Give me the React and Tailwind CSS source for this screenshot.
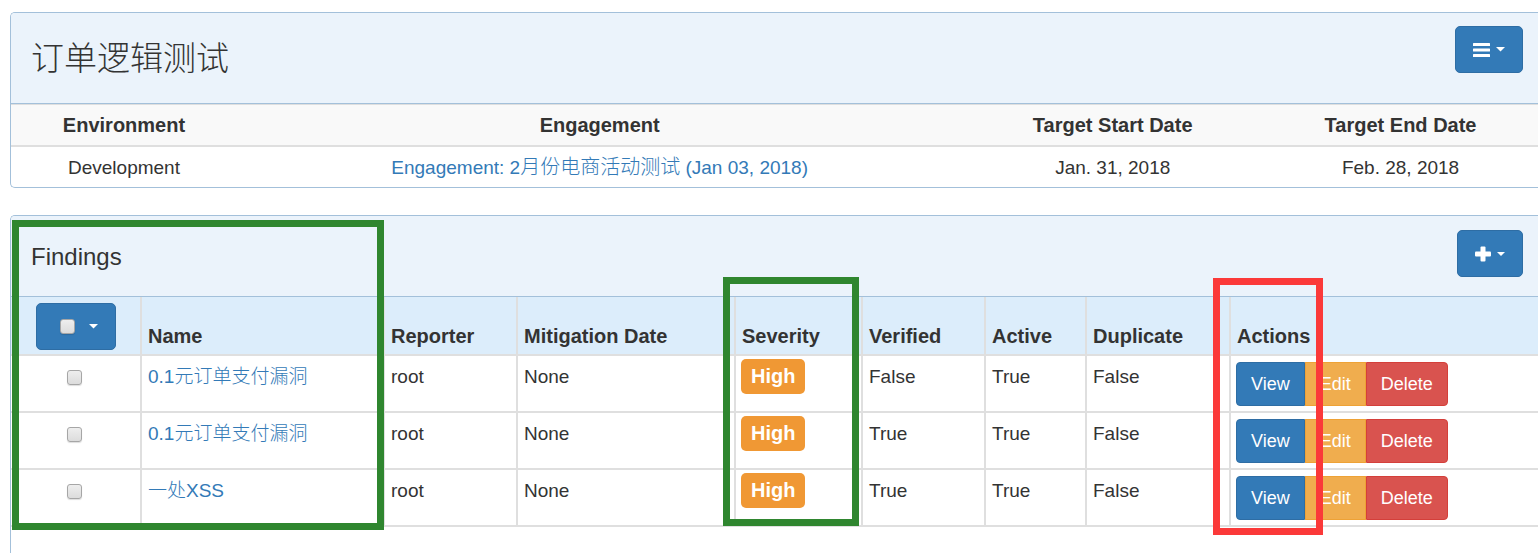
import React from "react";

const findings = [
  { name: "0.1元订单支付漏洞", verified: "False" },
  { name: "0.1元订单支付漏洞", verified: "True" },
  { name: "一处XSS", verified: "True" },
];

const columns = ["Name", "Reporter", "Mitigation Date", "Severity", "Verified", "Active", "Duplicate", "Actions"];

const headCell = "border-b-2 border-l-2 border-[#dfdfdf] px-[6px] pb-1 text-left align-bottom text-[20px] leading-7 font-bold";
const cell = "border-b-2 border-l-2 border-[#dfdfdf] text-left align-top";
const textCell = `${cell} px-[6px] pt-[7px] leading-7`;
const tick =
  "block size-[15px] appearance-none rounded-[3px] border border-[#a6a6a6] bg-linear-to-b from-[#eeeeee] to-[#dcdcdc] shadow-[0_1px_1px_#00000022] checked:from-[#337ab7] checked:to-[#337ab7]";
const actionButton = "h-11 border px-[14px] text-[18px] text-white";

function Caret() {
  return (
    <svg className="h-[5px] w-[9px]" viewBox="0 0 9 5" aria-hidden="true">
      <path d="M0 0h9L4.5 4.5z" fill="white" />
    </svg>
  );
}

function SmallCaret() {
  return (
    <svg className="h-1 w-2" viewBox="0 0 8 4" aria-hidden="true">
      <path d="M0 0h8L4 4z" fill="white" />
    </svg>
  );
}

function BarsIcon() {
  return (
    <svg className="h-[14px] w-[17px]" viewBox="0 0 17 14" fill="white" aria-hidden="true">
      <rect width="17" height="3" rx="0.5" />
      <rect y="5.5" width="17" height="3" rx="0.5" />
      <rect y="11" width="17" height="3" rx="0.5" />
    </svg>
  );
}

function PlusIcon() {
  return (
    <svg className="size-4" viewBox="0 0 16 16" fill="white" aria-hidden="true">
      <rect x="5.5" y="0.5" width="5" height="15" rx="1" />
      <rect x="0" y="5.5" width="16" height="5" rx="1" />
    </svg>
  );
}

function MenuButton({ label, children }) {
  return (
    <button
      type="button"
      aria-label={label}
      className="flex h-[47px] shrink-0 items-center gap-[6px] rounded-[5px] border border-[#2e6da4] bg-[#337ab7] px-[17px] text-white"
    >
      {children}
    </button>
  );
}

function Mark({ className }) {
  return <div aria-hidden="true" className={`pointer-events-none absolute border-7 ${className}`} />;
}

export default function App() {
  return (
    <main className="relative h-screen overflow-hidden bg-white pt-3 pl-[10px] font-['Liberation_Sans','Noto_Sans_CJK_SC',sans-serif] text-[19px] text-[#333]">
      <div className="flex h-full flex-col gap-[27px]">
        <section className="overflow-hidden rounded-l-[5px] border border-r-0 border-[#a3c0da]">
          <header className="flex items-start justify-between border-b border-[#a3c0da] bg-[#ebf3fb] pt-[13px] pr-[15px] pb-[11px] pl-5">
            <h1 className="text-[33px] leading-[66px] font-light">订单逻辑测试</h1>
            <MenuButton label="Test menu">
              <BarsIcon />
              <Caret />
            </MenuButton>
          </header>
          <table className="w-full table-fixed border-separate border-spacing-0 text-center">
            <colgroup>
              <col className="w-[14.8%]" />
              <col className="w-[47.5%]" />
              <col className="w-[19.7%]" />
              <col />
            </colgroup>
            <thead>
              <tr className="bg-[#f9f9f9] text-[20px] leading-[39px]">
                {["Environment", "Engagement", "Target Start Date", "Target End Date"].map((c) => (
                  <th key={c} className="border-t border-b-2 border-[#dfdfdf] pt-px font-bold">
                    {c}
                  </th>
                ))}
              </tr>
            </thead>
            <tbody>
              <tr className="leading-[38px]">
                <td className="pt-px">Development</td>
                <td className="pt-px">
                  <a href="#engagement" className="text-[#337ab7]">
                    Engagement: 2<span className="text-[20px] font-light">月份电商活动测试</span> (Jan 03, 2018)
                  </a>
                </td>
                <td className="pt-px">Jan. 31, 2018</td>
                <td className="pt-px">Feb. 28, 2018</td>
              </tr>
            </tbody>
          </table>
        </section>

        <section className="flex-1 overflow-hidden rounded-tl-[5px] border-t border-l border-[#a3c0da]">
          <header className="flex items-start justify-between border-b border-[#a3c0da] bg-[#ebf3fb] pt-[14px] pr-[15px] pb-3 pl-5">
            <h2 className="text-[24px] leading-[54px]">Findings</h2>
            <MenuButton label="Add finding">
              <PlusIcon />
              <SmallCaret />
            </MenuButton>
          </header>
          <table className="w-full table-fixed border-separate border-spacing-0">
            <colgroup>
              <col className="w-[129px]" />
              <col className="w-[243px]" />
              <col className="w-[133px]" />
              <col className="w-[218px]" />
              <col className="w-[127px]" />
              <col className="w-[123px]" />
              <col className="w-[101px]" />
              <col className="w-[144px]" />
              <col />
            </colgroup>
            <thead>
              <tr className="bg-[#dcedfb]">
                <th className="border-b-2 border-[#dfdfdf] pt-[6px] pb-1 pl-[25px]">
                  <div className="flex h-[47px] w-20 items-center justify-between rounded-[5px] border border-[#2e6da4] bg-[#337ab7] pr-[17px] pl-[23px]">
                    <input type="checkbox" aria-label="Select all findings" className={tick} />
                    <button type="button" aria-label="Bulk actions" className="py-4">
                      <Caret />
                    </button>
                  </div>
                </th>
                {columns.map((c) => (
                  <th key={c} className={headCell}>
                    {c}
                  </th>
                ))}
              </tr>
            </thead>
            <tbody>
              {findings.map((f, i) => (
                <tr key={i}>
                  <td className="border-b-2 border-[#dfdfdf] pt-[14px] pl-14 align-top">
                    <input type="checkbox" aria-label={`Select ${f.name}`} className={tick} />
                  </td>
                  <td className={textCell}>
                    <a href="#finding" className="font-light text-[#337ab7]">
                      {f.name}
                    </a>
                  </td>
                  <td className={textCell}>root</td>
                  <td className={textCell}>None</td>
                  <td className={`${cell} px-[5px] pt-[3px]`}>
                    <span className="block w-fit rounded-[5px] bg-[#f09834] px-[10px] text-[20px] leading-[35px] font-bold text-white">
                      High
                    </span>
                  </td>
                  <td className={textCell}>{f.verified}</td>
                  <td className={textCell}>True</td>
                  <td className={textCell}>False</td>
                  <td className={`${cell} px-[5px] pt-[6px] pb-[5px]`}>
                    <div className="flex">
                      <button type="button" className={`${actionButton} rounded-l-[4px] border-[#2e6da4] bg-[#337ab7]`}>
                        View
                      </button>
                      <button type="button" className={`${actionButton} border-[#eea236] bg-[#f0ad4e]`}>
                        Edit
                      </button>
                      <button type="button" className={`${actionButton} rounded-r-[4px] border-[#d43f3a] bg-[#d9534f]`}>
                        Delete
                      </button>
                    </div>
                  </td>
                </tr>
              ))}
            </tbody>
          </table>
        </section>
      </div>

      <Mark className="top-[220px] left-3 h-[310px] w-[372px] border-[#2f862f]" />
      <Mark className="top-[277px] left-[723px] h-[249px] w-[136px] border-[#2f862f]" />
      <Mark className="top-[278px] left-[1213px] h-[257px] w-[110px] border-[#fb3939]" />
    </main>
  );
}
